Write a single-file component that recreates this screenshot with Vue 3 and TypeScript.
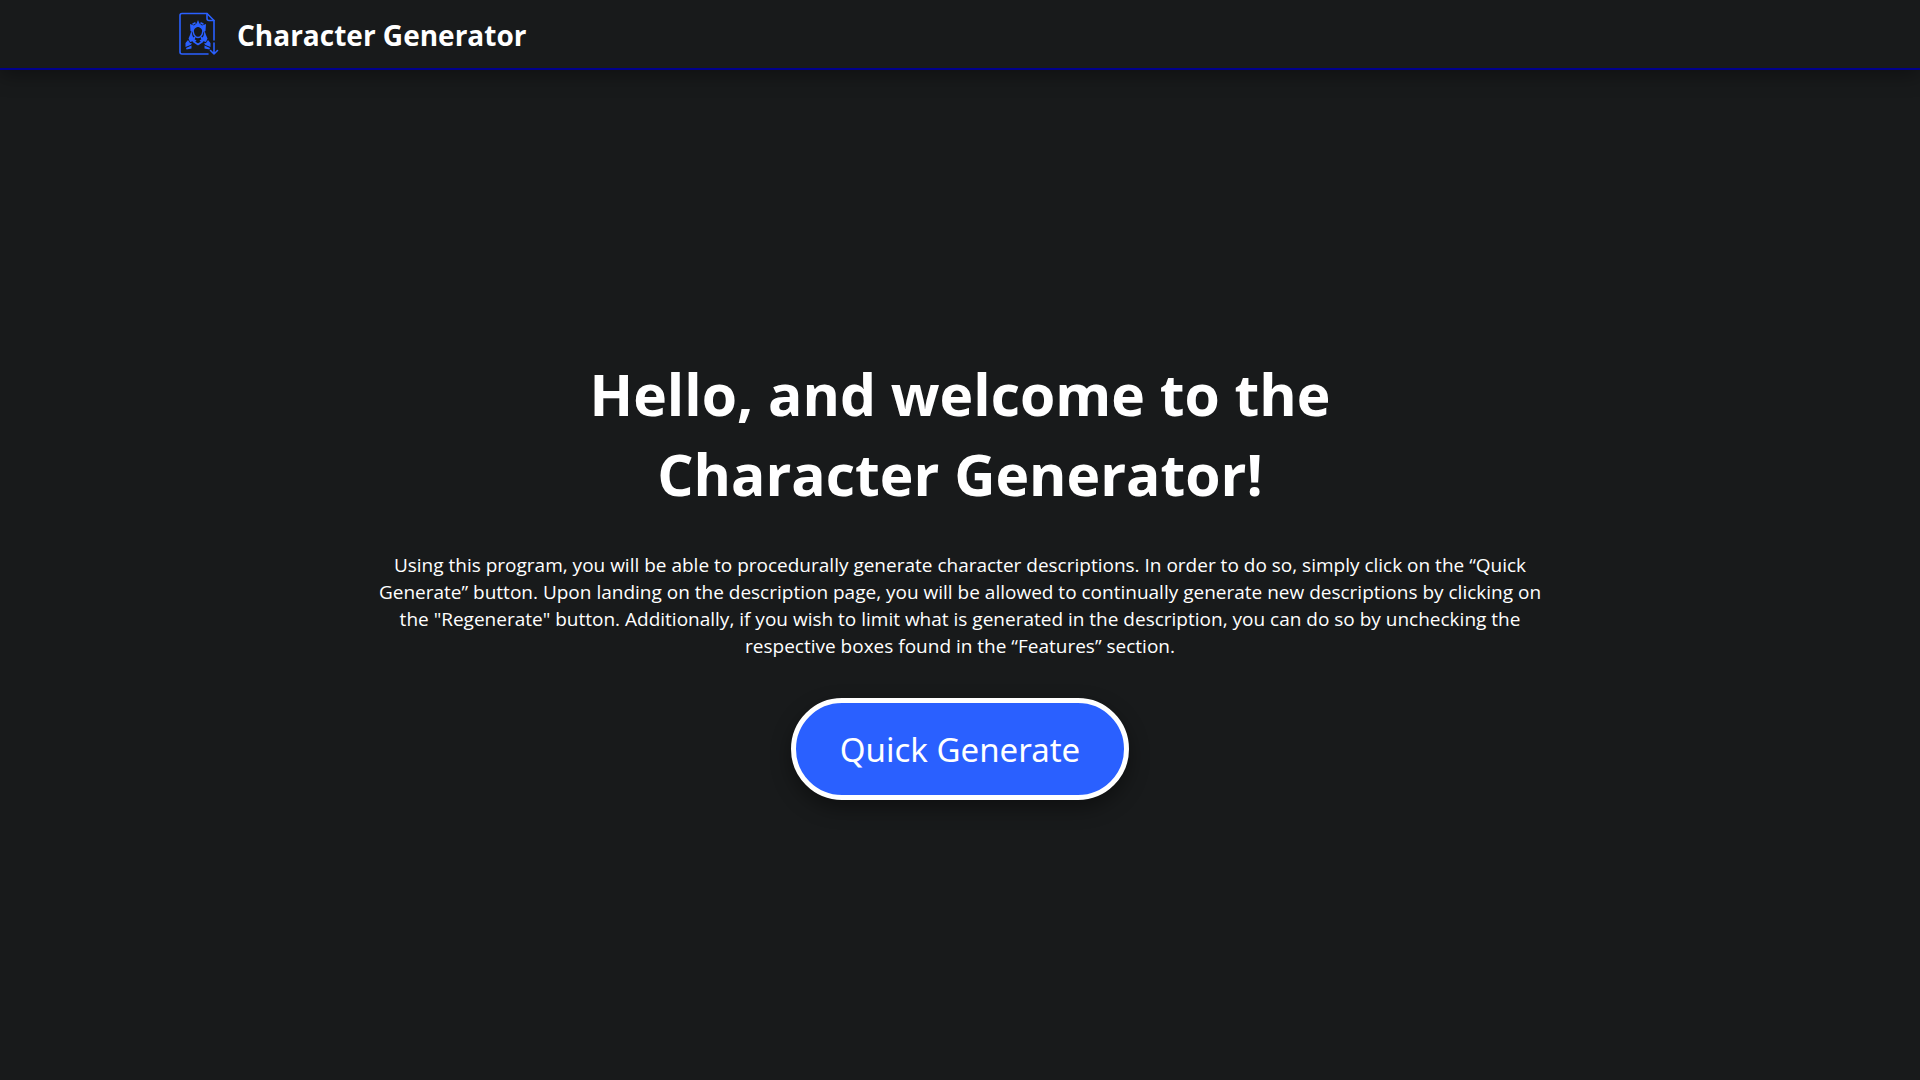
<script setup lang="ts">
const title = 'Character Generator'
const greeting: string[] = ['Hello, and welcome to the', 'Character Generator!']
const intro: string[] = [
  'Using this program, you will be able to procedurally generate character descriptions. In order to do so, simply click on the “Quick',
  'Generate” button. Upon landing on the description page, you will be allowed to continually generate new descriptions by clicking on',
  'the "Regenerate" button. Additionally, if you wish to limit what is generated in the description, you can do so by unchecking the',
  'respective boxes found in the “Features” section.',
]
</script>

<template>
  <div class="page">
    <header class="bar">
      <svg class="logo" viewBox="0 0 40 44" aria-hidden="true">
        <g fill="none" stroke="currentColor" stroke-width="1.6" stroke-linecap="round" stroke-linejoin="round">
          <path d="M29 42H3Q1 42 1 40V3.500Q1 1.500 3 1.500H28L35 8.500V28" />
          <path d="M28 1.500V6.500Q28 8.500 30 8.500H35M35 31V42M31.500 38.500L35 42L38.500 38.500" />
          <path d="M14 19Q15 25.500 19 25.500Q23 25.500 24 19Q24 15.500 19 14Q14 15.500 14 19Z" />
          <path d="M15.500 25.500L14.500 29.500L19 32.500L23.500 29.500L22.500 25.500M14.500 29.500L16.500 28.500M23.500 29.500L21.500 28.500" />
          <path d="M14 12L16 11M24 12L22 11" />
        </g>
        <g fill="currentColor">
          <path d="M19 8L20.500 11.500L23 13.500L27 12L26.500 19L24.500 20L23.500 16L19 14.500L14.500 16L13.500 20L11.500 19L11 12L15 13.500L17.500 11.500Z" />
          <path d="M12.500 18.500L13.500 24L15.500 26.500L14.500 29L11 30L9.500 26.500L11 23ZM25.500 18.500L24.500 24L22.500 26.500L23.500 29L27 30L28.500 26.500L27 23Z" />
          <path d="M9 28L11 31L13 31.500L11.500 33L6.500 35V31ZM29 28L27 31L25 31.500L26.500 33L31.500 35V31Z" />
          <path d="M7 36L12.500 33.500V36.500L7.500 37.500ZM31 36L25.500 33.500V36.500L30.500 37.500Z" />
        </g>
      </svg>
      <span class="title">{{ title }}</span>
    </header>
    <main class="welcome">
      <h1 class="greeting"><span v-for="line in greeting" :key="line" class="line">{{ line }} </span></h1>
      <p class="intro"><span v-for="line in intro" :key="line" class="line">{{ line }} </span></p>
      <button class="generate" type="button">Quick Generate</button>
    </main>
  </div>
</template>

<style>
body {
  margin: 0;
  background: #181a1b;
}
</style>

<style scoped>
.page {
  display: flex;
  flex-direction: column;
  min-height: 100vh;
  color: #fff;
  font-family: "Segoe UI", "Open Sans", "Noto Sans", sans-serif;
}
.bar {
  display: flex;
  align-items: center;
  gap: 18px;
  height: 68px;
  padding: 0 179px;
  border-bottom: 2px solid #00008b;
  box-shadow: 0 4px 20px rgba(0, 0, 0, 0.4);
}
.logo {
  width: 40px;
  height: 44px;
  color: #2a60ff;
}
.title {
  padding-top: 2px;
  font-size: 28px;
  font-weight: 700;
}
.welcome {
  display: flex;
  flex: 1;
  flex-direction: column;
  align-items: center;
  justify-content: center;
  gap: 38px;
  padding: 24px 0 20px;
  text-align: center;
}
.line {
  display: block;
}
.greeting {
  margin: 0;
  font-size: 57px;
  font-weight: 700;
  line-height: 80px;
}
.intro {
  margin: 0;
  font-size: 19px;
  line-height: 27px;
}
.generate {
  height: 102px;
  padding: 0 44px;
  border: 5px solid #fff;
  border-radius: 51px;
  background: #2a60ff;
  box-shadow: 0 8px 20px rgba(0, 0, 0, 0.4);
  color: #fff;
  font-family: Tahoma, "Noto Sans", sans-serif;
  font-size: 33px;
  cursor: pointer;
}
</style>
